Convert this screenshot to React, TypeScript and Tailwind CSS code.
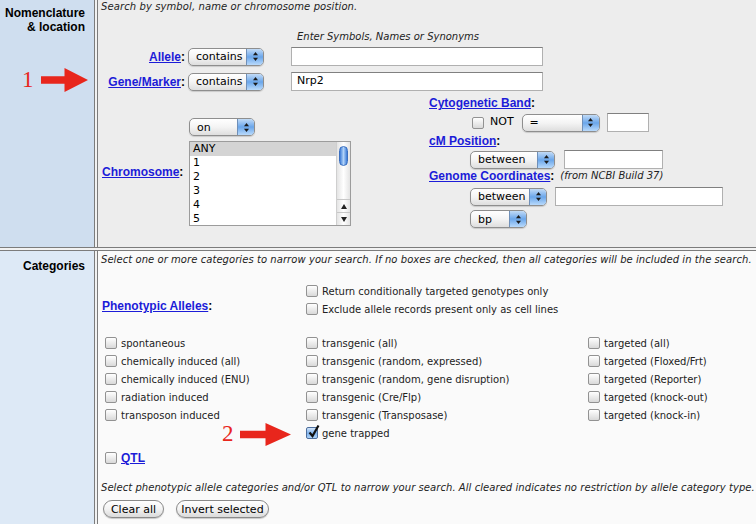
import React from "react";

const LABEL = "font-['Liberation_Sans',Arial,sans-serif] text-[12px] font-bold leading-[14px]";
const UI = "font-['DejaVu_Sans',Verdana,sans-serif]";
const LINK = "text-[#1c1cd8] underline";

function Arrows() {
  return (
    <svg width="7" height="11" viewBox="0 0 7 11">
      <path d="M3.5 1 L6 4.2 H1 Z" fill="#1a1a1a" />
      <path d="M3.5 10 L6 6.8 H1 Z" fill="#1a1a1a" />
    </svg>
  );
}

function Select({ value, className }: { value: string; className: string }) {
  return (
    <div
      className={`relative flex h-[18px] shrink-0 items-center overflow-hidden rounded-[5px] border border-[#8e8e8e] bg-gradient-to-b from-white via-[#f4f4f4] to-[#dedede] pl-[7px] text-[11px] leading-none text-black shadow-[0_1px_1px_rgba(0,0,0,0.15)] ${UI} ${className}`}
    >
      {value}
      <div className="absolute inset-y-0 right-0 flex w-[17px] items-center justify-center border-l border-[#6f8fb8] bg-gradient-to-b from-[#c2dbf6] via-[#6aa6ea] to-[#b9dafb]">
        <Arrows />
      </div>
    </div>
  );
}

function Input({ className, value }: { className: string; value?: string }) {
  return (
    <div
      className={`flex h-[19px] shrink-0 items-center border border-[#b0b0b0] border-t-[#808080] bg-white pl-[5px] text-[11px] ${UI} ${className}`}
    >
      {value}
    </div>
  );
}

function Check({ checked }: { checked?: boolean }) {
  if (checked) {
    return (
      <span className="relative block h-[12px] w-[12px] shrink-0 rounded-[2px] border border-[#4d6e9c] bg-gradient-to-b from-[#d3e5f9] via-[#7fb2ec] to-[#acd2f8]">
        <svg className="absolute -top-[4px] left-[1px]" width="12" height="14" viewBox="0 0 12 14">
          <path d="M1.5 8.5 L4.5 12 L10.5 1.5" stroke="#111" strokeWidth="2.2" fill="none" />
        </svg>
      </span>
    );
  }
  return (
    <span className="block h-[12px] w-[12px] shrink-0 rounded-[2px] border border-[#929292] bg-gradient-to-b from-white to-[#d9d9d9]" />
  );
}

function CheckRow({ label, checked }: { label: string; checked?: boolean }) {
  return (
    <div className="flex h-[18px] items-center gap-[4px]">
      <Check checked={checked} />
      <span className={`${UI} whitespace-nowrap text-[10px] text-[#222]`}>{label}</span>
    </div>
  );
}

function RedArrow({ w, h }: { w: number; h: number }) {
  const hx = w * 0.5;
  return (
    <svg width={w} height={h} viewBox={`0 0 ${w} ${h}`}>
      <path
        d={`M0 ${h * 0.34} H${hx} V0 L${w} ${h / 2} L${hx} ${h} V${h * 0.66} H0 Z`}
        fill="#e8261c"
      />
    </svg>
  );
}

function VSep() {
  return <div className="w-[4px] shrink-0 border-x border-[#7c7c7c] bg-[#f2f2f2]" />;
}

const col1 = ["spontaneous", "chemically induced (all)", "chemically induced (ENU)", "radiation induced", "transposon induced"];
const col2 = [
  "transgenic (all)",
  "transgenic (random, expressed)",
  "transgenic (random, gene disruption)",
  "transgenic (Cre/Flp)",
  "transgenic (Transposase)",
];
const col3 = ["targeted (all)", "targeted (Floxed/Frt)", "targeted (Reporter)", "targeted (knock-out)", "targeted (knock-in)"];

export default function App() {
  return (
    <div className="flex h-[524px] w-[756px] flex-col overflow-hidden bg-white text-black">
      {/* Nomenclature & location */}
      <div className="flex h-[247px] shrink-0">
        <div className="relative w-[94px] shrink-0 bg-[#cfdeef] pr-[9px] pt-[6px] text-right">
          <p className={LABEL}>
            Nomenclature
            <br />
            &amp; location
          </p>
          <div className="absolute left-[22px] top-[68px] flex items-center gap-[7px]">
            <span className="font-['Liberation_Serif',serif] text-[23px] leading-[24px] text-[#e8261c]">1</span>
            <RedArrow w={47} h={24} />
          </div>
        </div>
        <VSep />
        <div className="flex-1 bg-[#ededed] pl-[3px]">
          <p className={`${UI} text-[10px] italic leading-[14px] tracking-[0.1px] text-[#222]`}>
            Search by symbol, name or chromosome position.
          </p>
          <p className={`${UI} ml-[196px] mt-[17px] text-[10px] italic leading-[12px] text-[#222]`}>
            Enter Symbols, Names or Synonyms
          </p>
          <div className="mt-[4px] flex h-[19px] items-center">
            <div className={`w-[84px] text-right ${LABEL}`}>
              <a className={LINK}>Allele</a>:
            </div>
            <Select value="contains" className="ml-[3px] w-[76px]" />
            <Input className="ml-[27px] w-[252px]" />
          </div>
          <div className="mt-[6px] flex h-[19px] items-center">
            <div className={`w-[84px] text-right ${LABEL}`}>
              <a className={LINK}>Gene/Marker</a>:
            </div>
            <Select value="contains" className="ml-[3px] w-[76px]" />
            <Input className="ml-[27px] w-[252px]" value="Nrp2" />
          </div>
          <div className="mt-[5px] flex">
            <div className="mt-[20px] flex w-[328px] items-center">
              <div className={`w-[88px] pl-[1px] ${LABEL}`}>
                <a className={LINK}>Chromosome</a>:
              </div>
              <div className="flex flex-col gap-[5px]">
                <Select value="on" className="w-[66px]" />
                <div className="flex h-[85px] w-[162px] border border-[#9c9c9c] bg-white">
                  <div className={`flex-1 ${UI} text-[11px] leading-[14px]`}>
                    <div className="bg-[#d4d4d4] pl-[3px]">ANY</div>
                    {["1", "2", "3", "4", "5"].map((n) => (
                      <div key={n} className="pl-[3px]">
                        {n}
                      </div>
                    ))}
                  </div>
                  <div className="flex w-[14px] flex-col border-l border-[#cfcfcf] bg-gradient-to-r from-[#e4e4e4] via-white to-[#e4e4e4]">
                    <div className="flex-1 px-[2px] pt-[4px]">
                      <div className="h-[20px] rounded-full border border-[#3a6fc0] bg-gradient-to-r from-[#3c7bd6] via-[#b0d2f8] to-[#3c7bd6]" />
                    </div>
                    <div className="flex h-[13px] items-center justify-center border-t border-[#c8c8c8]">
                      <svg width="6" height="5" viewBox="0 0 6 5">
                        <path d="M3 0 L6 5 H0 Z" fill="#222" />
                      </svg>
                    </div>
                    <div className="flex h-[13px] items-center justify-center border-t border-[#c8c8c8]">
                      <svg width="6" height="5" viewBox="0 0 6 5">
                        <path d="M3 5 L6 0 H0 Z" fill="#222" />
                      </svg>
                    </div>
                  </div>
                </div>
              </div>
            </div>
            <div className="flex flex-col">
              <div className={LABEL}>
                <a className={LINK}>Cytogenetic Band</a>:
              </div>
              <div className="ml-[43px] mt-[3px] flex h-[19px] items-center">
                <Check />
                <span className={`${UI} ml-[6px] text-[11px]`}>NOT</span>
                <Select value="=" className="ml-[8px] w-[78px]" />
                <Input className="ml-[7px] w-[42px]" />
              </div>
              <div className={`mt-[2px] ${LABEL}`}>
                <a className={LINK}>cM Position</a>:
              </div>
              <div className="ml-[41px] mt-[2px] flex h-[19px] items-center">
                <Select value="between" className="w-[85px]" />
                <Input className="ml-[9px] w-[99px]" />
              </div>
              <div className={`flex items-center ${LABEL}`}>
                <a className={LINK}>Genome Coordinates</a>:
                <span className={`${UI} ml-[6px] text-[10px] font-normal italic text-[#222]`}>
                  (from NCBI Build 37)
                </span>
              </div>
              <div className="ml-[41px] mt-[4px] flex h-[19px] items-center">
                <Select value="between" className="w-[77px]" />
                <Input className="ml-[8px] w-[168px]" />
              </div>
              <div className="ml-[41px] mt-[4px] flex h-[18px] items-center">
                <Select value="bp" className="w-[57px]" />
              </div>
            </div>
          </div>
        </div>
      </div>

      <div className="h-[4px] shrink-0 border-y border-[#7c7c7c] bg-[#f2f2f2]" />

      {/* Categories */}
      <div className="flex flex-1">
        <div className="w-[94px] shrink-0 bg-[#dde9f6] pr-[9px] pt-[8px] text-right">
          <p className={LABEL}>Categories</p>
        </div>
        <VSep />
        <div className="relative flex-1 bg-[#fafafa] pl-[3px] pt-[3px]">
          <p className={`${UI} whitespace-nowrap text-[10px] italic leading-[12px] tracking-[0.06px] text-[#222]`}>
            Select one or more categories to narrow your search. If no boxes are checked, then all categories will be
            included in the search.
          </p>
          <div className="mt-[16px] flex">
            <div className={`mt-[17px] w-[205px] pl-[1px] ${LABEL}`}>
              <a className={LINK}>Phenotypic Alleles</a>:
            </div>
            <div>
              <CheckRow label="Return conditionally targeted genotypes only" />
              <CheckRow label="Exclude allele records present only as cell lines" />
            </div>
          </div>
          <div className="mt-[16px] flex pl-[4px]">
            <div className="w-[201px]">
              {col1.map((l) => (
                <CheckRow key={l} label={l} />
              ))}
            </div>
            <div className="w-[282px]">
              {col2.map((l) => (
                <CheckRow key={l} label={l} />
              ))}
              <CheckRow label="gene trapped" checked />
            </div>
            <div>
              {col3.map((l) => (
                <CheckRow key={l} label={l} />
              ))}
            </div>
          </div>
          <div className="ml-[4px] mt-[7px] flex h-[18px] items-center gap-[4px]">
            <Check />
            <a className={`${LABEL} ${LINK}`}>QTL</a>
          </div>
          <p className={`${UI} mt-[15px] whitespace-nowrap text-[10px] italic leading-[12px] tracking-[0.06px] text-[#222]`}>
            Select phenotypic allele categories and/or QTL to narrow your search. All cleared indicates no restriction by
            allele category type.
          </p>
          <div className="ml-[2px] mt-[6px] flex gap-[12px]">
            <button
              className={`h-[18px] w-[61px] rounded-full border border-[#8a8a8a] bg-gradient-to-b from-white via-[#f3f3f3] to-[#dadada] text-[11px] leading-none shadow-[0_1px_1px_rgba(0,0,0,0.2)] ${UI}`}
            >
              Clear all
            </button>
            <button
              className={`h-[18px] w-[93px] rounded-full border border-[#8a8a8a] bg-gradient-to-b from-white via-[#f3f3f3] to-[#dadada] text-[11px] leading-none shadow-[0_1px_1px_rgba(0,0,0,0.2)] ${UI}`}
            >
              Invert selected
            </button>
          </div>
          <div className="absolute left-[124px] top-[171px] flex items-center gap-[6px]">
            <span className="font-['Liberation_Serif',serif] text-[23px] leading-[24px] text-[#e8261c]">2</span>
            <RedArrow w={51} h={23} />
          </div>
        </div>
      </div>
    </div>
  );
}
